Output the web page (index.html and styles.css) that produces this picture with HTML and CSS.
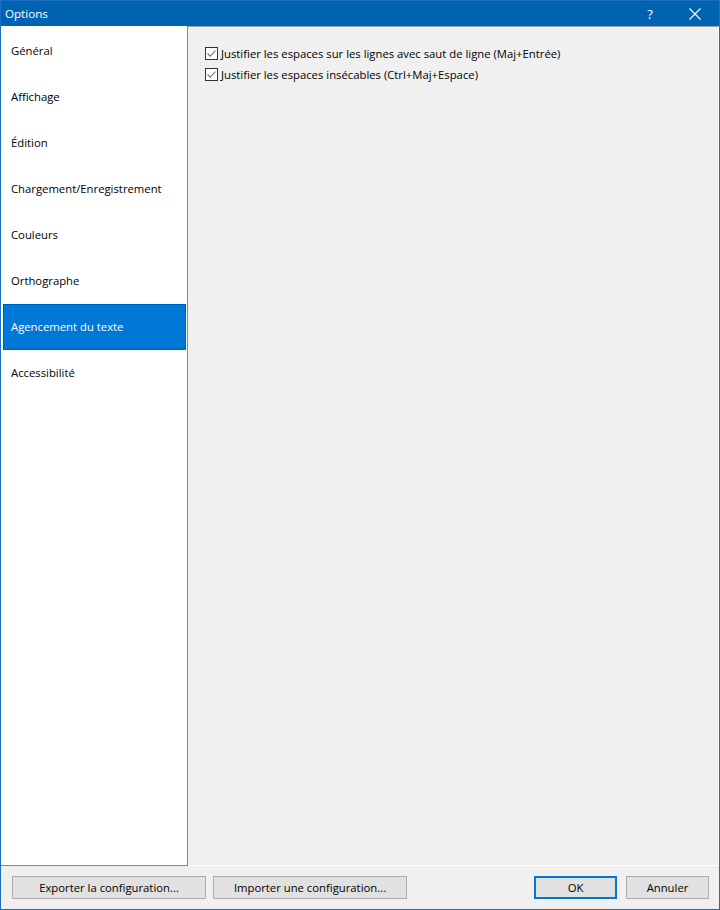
FILE: index.html
```html
<!DOCTYPE html>
<html lang="fr">
<head>
<meta charset="utf-8">
<title>Options</title>
<link rel="stylesheet" href="styles.css">
</head>
<body>
<div class="window">
  <div class="titlebar">
    <span class="title">Options</span>
    <span class="tb-btn help">?</span>
    <span class="tb-btn close">
      <svg width="12" height="12" viewBox="0 0 12 12"><path d="M0.5 0.5 L11.5 11.5 M11.5 0.5 L0.5 11.5" stroke="#fff" stroke-width="1.1" fill="none"/></svg>
    </span>
  </div>
  <div class="content">
    <ul class="nav">
      <li class="nav-item">Général</li>
      <li class="nav-item">Affichage</li>
      <li class="nav-item">Édition</li>
      <li class="nav-item">Chargement/Enregistrement</li>
      <li class="nav-item">Couleurs</li>
      <li class="nav-item">Orthographe</li>
      <li class="nav-item selected">Agencement du texte</li>
      <li class="nav-item">Accessibilité</li>
    </ul>
    <div class="panel">
      <label class="check">
        <span class="box"><svg width="11" height="11" viewBox="0 0 11 11"><path d="M1.5 5.5 L4.3 8.3 L9.5 2.5" stroke="#6b6b6b" stroke-width="1.1" fill="none"/></svg></span>
        <span>Justifier les espaces sur les lignes avec saut de ligne (Maj+Entrée)</span>
      </label>
      <label class="check">
        <span class="box"><svg width="11" height="11" viewBox="0 0 11 11"><path d="M1.5 5.5 L4.3 8.3 L9.5 2.5" stroke="#6b6b6b" stroke-width="1.1" fill="none"/></svg></span>
        <span>Justifier les espaces insécables (Ctrl+Maj+Espace)</span>
      </label>
    </div>
  </div>
  <div class="footer">
    <button class="btn wide">Exporter la configuration...</button>
    <button class="btn wide">Importer une configuration...</button>
    <span class="spacer"></span>
    <button class="btn default">OK</button>
    <button class="btn">Annuler</button>
  </div>
</div>
</body>
</html>
```
FILE: styles.css
```css
html, body {
  margin: 0;
  padding: 0;
}
body {
  width: 720px;
  height: 910px;
  font-family: "Open Sans", "Noto Sans", "Liberation Sans", sans-serif;
  font-size: 11.3px;
  color: #000;
  background: #f0f0f0;
}
.window {
  box-sizing: border-box;
  width: 720px;
  height: 910px;
  border: 1px solid #1a6fc2;
  display: flex;
  flex-direction: column;
  background: #f0f0f0;
}
.titlebar {
  height: 25px;
  background: #0063b1;
  color: #fff;
  display: flex;
  align-items: center;
  flex-shrink: 0;
}
.title {
  padding-left: 4px;
  flex: 1;
  font-size: 11.6px;
}
.tb-btn {
  display: flex;
  align-items: center;
  justify-content: center;
  height: 25px;
}
.help {
  width: 20px;
  margin-right: 25px;
  font-size: 13px;
}
.close {
  width: 20px;
  margin-right: 14px;
}
.content {
  display: flex;
  height: 840px;
  flex-shrink: 0;
}
.nav {
  list-style: none;
  margin: 0;
  padding: 2px 1px 0 2px;
  width: 183px;
  background: #fff;
  border-right: 1px solid #828790;
  border-bottom: 1px solid #828790;
  height: 837px;
}
.nav-item {
  height: 46px;
  line-height: 46px;
  padding-left: 8px;
  box-sizing: border-box;
}
.nav-item.selected {
  background: #0078d7;
  color: #fff;
  border: 1px dotted #3a2a10;
  padding-left: 7px;
  line-height: 44px;
}
.panel {
  flex: 1;
  box-sizing: border-box;
  height: 840px;
  border-top: 1px solid #a0a0a0;
  border-right: 1px solid #fff;
  border-bottom: 1px solid #fff;
  padding: 19px 0 0 17px;
  display: flex;
  flex-direction: column;
  gap: 7px;
}
.check {
  display: flex;
  align-items: center;
  gap: 3px;
  height: 14px;
}
.box {
  box-sizing: border-box;
  width: 13px;
  height: 13px;
  border: 1px solid #333;
  background: #fff;
  display: flex;
  align-items: center;
  justify-content: center;
}
.footer {
  flex: 1;
  display: flex;
  align-items: flex-start;
  padding: 10px 10px 0 11px;
  gap: 7px;
}
.spacer {
  flex: 1;
}
.btn {
  font-family: inherit;
  font-size: 11.3px;
  color: #000;
  height: 23px;
  width: 83px;
  box-sizing: border-box;
  background: #e1e1e1;
  border: 1px solid #adadad;
  padding: 0;
  margin: 0;
}
.btn.wide {
  width: 194px;
}
.btn.default {
  border: 2px solid #0078d7;
  margin-right: 2px;
}
```
